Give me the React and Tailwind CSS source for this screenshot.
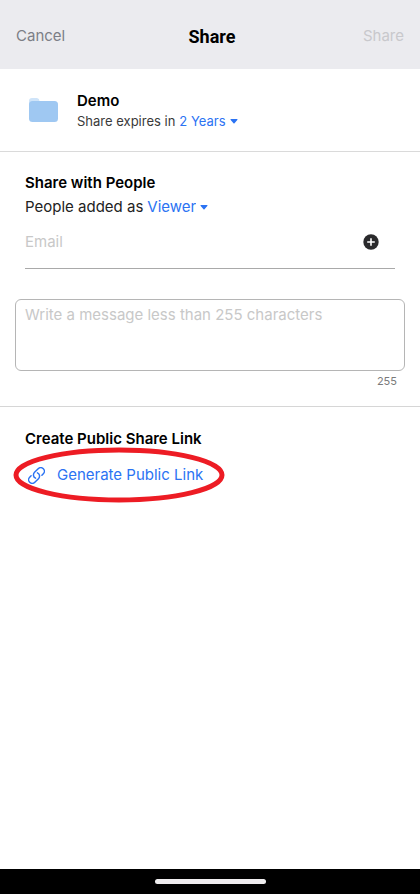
import React, { useState } from "react";

const MAX_MESSAGE = 255;

function Caret() {
  return (
    <svg className="w-2 h-2 shrink-0 pointer-events-none" viewBox="0 0 8 8" fill="currentColor" aria-hidden="true">
      <path d="M1.2 2h5.6c.6 0 .9.6.5 1L4.5 6.3a.7.7 0 0 1-1 0L.7 3c-.4-.4-.1-1 .5-1z" />
    </svg>
  );
}

function FolderIcon() {
  return (
    <svg className="w-[30px] h-[26px] shrink-0" viewBox="0 0 30 26" aria-hidden="true">
      <path d="M3 0h5a3 3 0 0 1 2.5 3V8H0V3a3 3 0 0 1 3-3z" fill="#cfe4f9" />
      <rect x="0" y="3" width="29" height="21" rx="3.5" fill="#9fc8f2" />
    </svg>
  );
}

function InlineSelect({ label, value, onChange, options }) {
  return (
    <span className="inline-flex items-center gap-1 text-[#2b73f3]">
      <select
        aria-label={label}
        value={value}
        onChange={(e) => onChange(e.target.value)}
        className="appearance-none field-sizing-content bg-transparent p-0 outline-none cursor-pointer"
      >
        {options.map((o) => (
          <option key={o}>{o}</option>
        ))}
      </select>
      <Caret />
    </span>
  );
}

export default function App() {
  const [expiry, setExpiry] = useState("2 Years");
  const [role, setRole] = useState("Viewer");
  const [email, setEmail] = useState("");
  const [message, setMessage] = useState("");

  return (
    <div className="min-h-screen flex flex-col bg-white text-black font-['Inter',sans-serif]">
      {/* Header */}
      <header className="grid grid-cols-[1fr_auto_1fr] items-center h-[69px] pt-1 px-4 bg-[#ebebef] text-[15px]">
        <button className="justify-self-start text-[#7c7e86]">Cancel</button>
        <h1 className="pl-1 font-['Roboto',sans-serif] text-lg font-bold">Share</h1>
        <button className="justify-self-end text-[#c8c8cc]" disabled>Share</button>
      </header>

      <main className="flex-1">
        {/* Shared item */}
        <section className="flex items-center gap-[18px] h-[83px] pt-0.5 pl-[29px] pr-4 border-b border-[#dadada]">
          <FolderIcon />
          <div>
            <h2 className="text-[15px] leading-5 font-semibold">Demo</h2>
            <p className="flex items-center gap-1 text-[13px] leading-5 text-[#3a3a3a]">
              Share expires in
              <InlineSelect label="Share expires in" value={expiry} onChange={setExpiry} options={["2 Years", "1 Year", "30 Days"]} />
            </p>
          </div>
        </section>

        {/* People */}
        <section className="pt-[19px] border-b border-[#d6d6d6]">
          <div className="px-[25px]">
            <h2 className="text-[15px] leading-6 font-semibold">Share with People</h2>
            <p className="flex items-center gap-1 text-[15px] leading-6 text-[#222]">
              People added as
              <InlineSelect label="People added as" value={role} onChange={setRole} options={["Viewer", "Editor"]} />
            </p>
            <div className="flex items-center h-[50px] pb-1 pr-4 border-b border-[#a9a9a9]">
              <input
                type="email"
                aria-label="Email"
                placeholder="Email"
                value={email}
                onChange={(e) => setEmail(e.target.value)}
                className="flex-1 min-w-0 text-[15px] leading-6 outline-none placeholder:text-[#c8c8c8]"
              />
              <button aria-label="Add person">
                <svg className="w-4 h-4" viewBox="0 0 16 16" aria-hidden="true">
                  <circle cx="8" cy="8" r="7.7" fill="#2a2a2c" />
                  <path d="M8 4.2v7.6M4.2 8h7.6" stroke="#fff" strokeWidth="1.6" />
                </svg>
              </button>
            </div>
          </div>
          <div className="px-[15px] pt-[30px] pb-4">
            <textarea
              aria-label="Message"
              placeholder="Write a message less than 255 characters"
              maxLength={MAX_MESSAGE}
              value={message}
              onChange={(e) => setMessage(e.target.value)}
              className="block w-full h-[72px] px-[9px] py-[3px] rounded-md border border-[#b5b5b5] text-[15px] leading-6 resize-none outline-none placeholder:text-[#c8c8c8]"
            />
            <p className="pt-px pr-2 text-right text-[11px] leading-[18px] text-[#7a7a7a]">{MAX_MESSAGE - message.length}</p>
          </div>
        </section>

        {/* Public link */}
        <section className="px-[25px] pt-5">
          <h2 className="text-[15px] leading-6 font-semibold">Create Public Share Link</h2>
          <div className="relative w-fit mt-3">
            <button className="flex items-center gap-3 pl-[3px] text-[15px] leading-6 text-[#2b73f3]">
              <svg className="w-[17px] h-[17px]" viewBox="1.5 1.5 21 21" fill="none" stroke="currentColor" strokeWidth="1.8" strokeLinecap="round" strokeLinejoin="round" aria-hidden="true">
                <path d="M13.19 8.688a4.5 4.5 0 0 1 1.242 7.244l-4.5 4.5a4.5 4.5 0 0 1-6.364-6.364l1.757-1.757" />
                <path d="M18.675 11.689l1.757-1.757a4.5 4.5 0 0 0-6.364-6.364l-4.5 4.5a4.5 4.5 0 0 0 1.242 7.244" />
              </svg>
              Generate Public Link
            </button>
            <svg className="absolute -left-3 -top-4 w-[212px] h-[56px] pointer-events-none" viewBox="0 0 212 56" aria-hidden="true">
              <ellipse cx="106" cy="28" rx="103" ry="25" fill="none" stroke="#ed1c24" strokeWidth="5" />
            </svg>
          </div>
        </section>
      </main>

      {/* System navigation bar */}
      <footer className="flex items-center justify-center h-[25px] bg-black">
        <div className="w-[111px] h-[5px] rounded-full bg-[#efedef]" />
      </footer>
    </div>
  );
}
